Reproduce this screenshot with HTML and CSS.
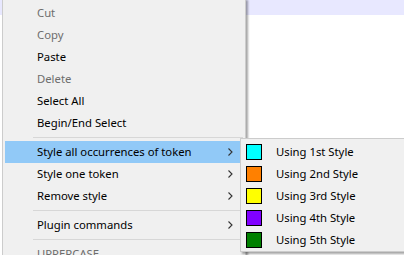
FILE: index.html
```html
<!DOCTYPE html>
<html lang="en">
<head>
    <meta charset="UTF-8">
    <title>Context menu</title>
    <link rel="stylesheet" href="styles.css">
</head>
<body>
    <div class="editor">
        <div class="current-line"></div>
    </div>

    <div class="menu main-menu">
        <div class="item disabled">Cut</div>
        <div class="item disabled">Copy</div>
        <div class="item">Paste</div>
        <div class="item disabled">Delete</div>
        <div class="item">Select All</div>
        <div class="item">Begin/End Select</div>
        <div class="sep"></div>
        <div class="item active">Style all occurrences of token
            <svg class="arrow" width="5" height="8" viewBox="0 0 5 8"><path d="M0.5 0.5 L4 4 L0.5 7.5" fill="none" stroke="#333" stroke-width="1.1"/></svg>
        </div>
        <div class="item">Style one token
            <svg class="arrow" width="5" height="8" viewBox="0 0 5 8"><path d="M0.5 0.5 L4 4 L0.5 7.5" fill="none" stroke="#333" stroke-width="1.1"/></svg>
        </div>
        <div class="item">Remove style
            <svg class="arrow" width="5" height="8" viewBox="0 0 5 8"><path d="M0.5 0.5 L4 4 L0.5 7.5" fill="none" stroke="#333" stroke-width="1.1"/></svg>
        </div>
        <div class="sep"></div>
        <div class="item">Plugin commands
            <svg class="arrow" width="5" height="8" viewBox="0 0 5 8"><path d="M0.5 0.5 L4 4 L0.5 7.5" fill="none" stroke="#333" stroke-width="1.1"/></svg>
        </div>
        <div class="sep"></div>
        <div class="item disabled">UPPERCASE</div>
    </div>

    <div class="menu sub-menu">
        <div class="item"><span class="swatch cyan"></span>Using 1st Style</div>
        <div class="item"><span class="swatch orange"></span>Using 2nd Style</div>
        <div class="item"><span class="swatch yellow"></span>Using 3rd Style</div>
        <div class="item"><span class="swatch purple"></span>Using 4th Style</div>
        <div class="item"><span class="swatch green"></span>Using 5th Style</div>
    </div>
</body>
</html>
```

FILE: styles.css
```css
html, body {
    margin: 0;
    height: 100%;
    overflow: hidden;
}
body {
    font-family: "Noto Sans", "Open Sans", sans-serif;
    font-size: 11.3px;
    background: #fff;
    position: relative;
}
.editor {
    height: 100%;
}
.current-line {
    height: 15px;
    background: #e8e8ff;
}

.menu {
    position: absolute;
    box-sizing: border-box;
    background: #f0f0f0;
    border: 1px solid #cccccc;
    box-shadow: 2px 2px 2px rgba(0,0,0,0.35);
    color: #000;
}
.main-menu {
    left: 2px;
    top: -2px;
    width: 244px;
    padding: 3px 2px 2px 2px;
}
.sub-menu {
    left: 240px;
    top: 138px;
    width: 200px;
    padding: 2px 2px 0 2px;
}

.item {
    height: 22px;
    line-height: 22px;
    padding-left: 32px;
    position: relative;
    white-space: nowrap;
}
.item.disabled {
    color: #6d6d6d;
}
.item.active {
    background: #91c9f7;
}
.arrow {
    position: absolute;
    right: 10px;
    top: 7px;
}
.sep {
    height: 7px;
    margin-left: 28px;
    position: relative;
}
.sep::after {
    content: "";
    position: absolute;
    left: 0;
    right: 0;
    top: 3px;
    border-top: 1px solid #d7d7d7;
}

.sub-menu .item {
    display: flex;
    align-items: center;
    padding-left: 3px;
}
.swatch {
    width: 14px;
    height: 14px;
    border: 1px solid #000;
    margin-right: 14px;
}
.cyan { background: #00ffff; }
.orange { background: #ff8000; }
.yellow { background: #ffff00; }
.purple { background: #8000ff; }
.green { background: #008000; }
```
